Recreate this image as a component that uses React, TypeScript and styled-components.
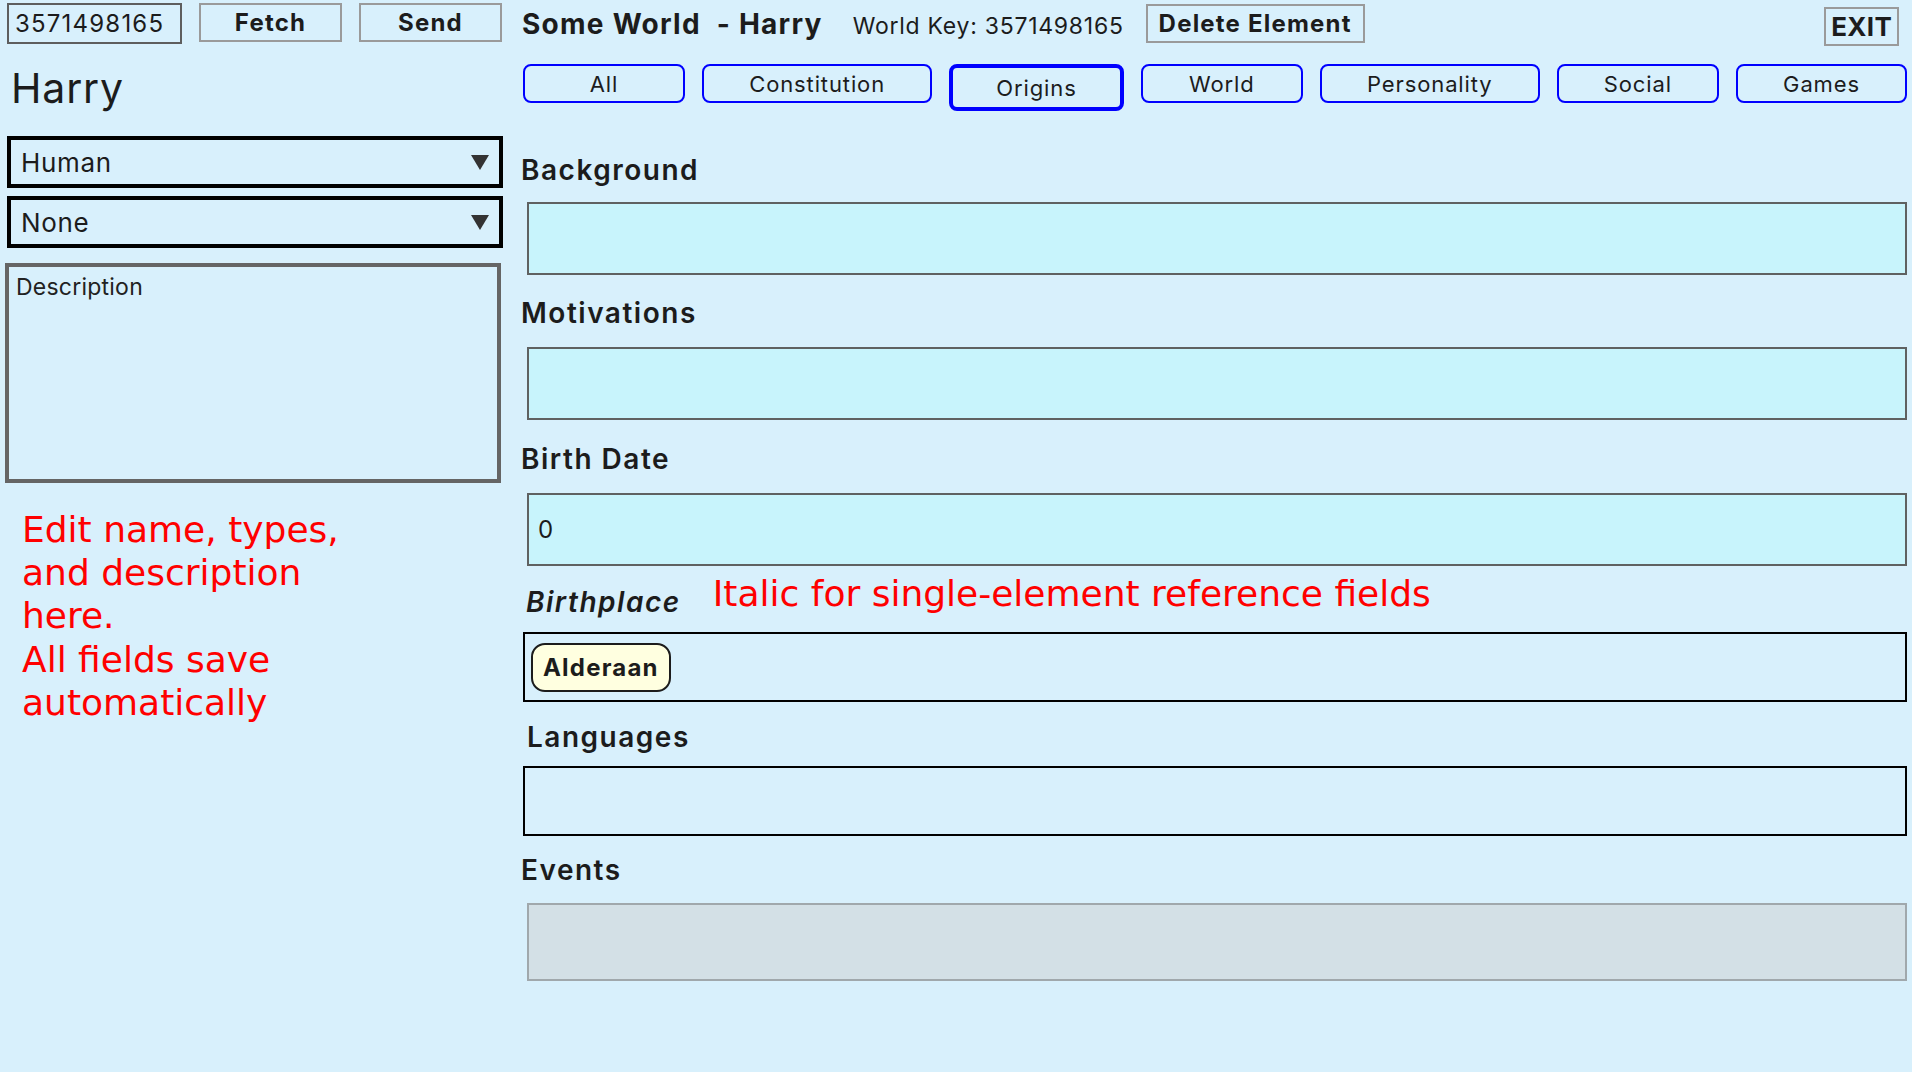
import React from "react";
import styled, { createGlobalStyle, css } from "styled-components";

const GlobalStyle = createGlobalStyle`
  html, body {
    margin: 0;
    padding: 0;
    background: #d8f0fc;
  }
  body {
    font-family: Inter, "Noto Sans", sans-serif;
    color: #1c1c1c;
    letter-spacing: 0.04em;
  }
  *, *::before, *::after {
    box-sizing: border-box;
  }
`;

const Page = styled.div`
  display: grid;
  grid-template-columns: 498px 1fr;
  column-gap: 18px;
  padding: 0 5px;
  min-height: 100vh;
  background: #d8f0fc;
`;

/* ---------- Left column ---------- */

const LeftCol = styled.div`
  display: flex;
  flex-direction: column;
  padding-top: 3px;
`;

const KeyRow = styled.div`
  display: flex;
  align-items: flex-start;
  gap: 17px;
  padding-left: 2px;
`;

const KeyInput = styled.input`
  width: 175px;
  height: 41px;
  border: 2px solid #5e5e5e;
  background: transparent;
  font-family: inherit;
  font-size: 24px;
  font-weight: 400;
  letter-spacing: 0.05em;
  color: #1c1c1c;
  padding: 0 0 0 6px;
  outline: none;
`;

const GrayButton = styled.button<{ $wide?: boolean; $size?: number }>`
  height: 39px;
  ${(p) => (p.$wide ? css`width: 143px;` : css`padding: 0 11px;`)}
  border: 2px solid #9a9a9a;
  background: transparent;
  font-family: inherit;
  font-size: ${(p) => p.$size ?? 24}px;
  font-weight: 700;
  letter-spacing: 0.05em;
  color: #1c1c1c;
  cursor: pointer;
`;

const Name = styled.h2`
  margin: 19px 0 0;
  padding-left: 6px;
  font-size: 41px;
  line-height: 50px;
  font-weight: 400;
  letter-spacing: 0.02em;
  color: #1c1c1c;
`;

const SelectBox = styled.div<{ $gap: number }>`
  margin: ${(p) => p.$gap}px 0 0 2px;
  width: 496px;
  height: 52px;
  border: 4px solid #000;
  display: flex;
  align-items: center;
  justify-content: space-between;
  padding: 0 10px;
  font-size: 26px;
  color: #1c1c1c;
`;

const Caret = styled.span`
  width: 0;
  height: 0;
  border-left: 9.5px solid transparent;
  border-right: 9.5px solid transparent;
  border-top: 15px solid #333;
`;

const Description = styled.textarea`
  margin-top: 15px;
  width: 496px;
  height: 220px;
  border: 4px solid #656565;
  background: transparent;
  padding: 6px 7px;
  font-family: inherit;
  font-size: 23px;
  letter-spacing: 0.01em;
  color: #1c1c1c;
  resize: none;
  outline: none;
  &::placeholder {
    color: #222;
    opacity: 1;
  }
`;

const Hint = styled.p`
  margin: 25px 0 0;
  padding-left: 17px;
  max-width: 360px;
  font-family: "DejaVu Sans", "Liberation Sans", sans-serif;
  font-size: 36px;
  line-height: 43.2px;
  letter-spacing: 0;
  color: #ff0000;
`;

/* ---------- Right column ---------- */

const RightCol = styled.div`
  display: flex;
  flex-direction: column;
`;

const TopBar = styled.div`
  display: flex;
  align-items: center;
  height: 39px;
  margin-top: 4px;
`;

const Title = styled.h1`
  margin: 0;
  padding-left: 1px;
  font-size: 28px;
  line-height: 34px;
  font-weight: 700;
  letter-spacing: 0.045em;
  color: #1c1c1c;
  white-space: pre;
`;

const WorldKey = styled.span`
  margin: 4px 22px 0 30px;
  font-size: 23px;
  letter-spacing: 0.032em;
  color: #1c1c1c;
`;

const ExitButton = styled(GrayButton)`
  margin: 6px 8px 0 auto;
  padding: 0 5px;
  letter-spacing: 0.01em;
`;

const Tabs = styled.nav`
  display: flex;
  justify-content: space-between;
  align-items: flex-start;
  margin: 21px 0 0 2px;
`;

const Tab = styled.button<{ $active?: boolean }>`
  min-width: 162px;
  height: ${(p) => (p.$active ? 47 : 39)}px;
  padding: 0 ${(p) => (p.$active ? 43 : 45)}px;
  border: ${(p) => (p.$active ? 4 : 2)}px solid #0000ff;
  border-radius: 8px;
  background: transparent;
  font-family: inherit;
  font-size: 22px;
  letter-spacing: 0.04em;
  color: #1c1c1c;
  cursor: pointer;
`;

const Field = styled.section<{ $top: number }>`
  display: flex;
  flex-direction: column;
  margin-top: ${(p) => p.$top}px;
`;

const Label = styled.label<{ $indent?: number; $italic?: boolean }>`
  padding-left: ${(p) => p.$indent ?? 0}px;
  font-size: 28px;
  line-height: 34px;
  font-weight: 600;
  letter-spacing: 0.054em;
  font-style: ${(p) => (p.$italic ? "italic" : "normal")};
  color: #1c1c1c;
`;

const LabelRow = styled.div`
  display: flex;
  align-items: flex-end;
  gap: 32px;
`;

const Note = styled.span`
  margin-bottom: 4px;
  font-family: "DejaVu Sans", "Liberation Sans", sans-serif;
  font-size: 36px;
  line-height: 43px;
  letter-spacing: 0;
  color: #ff0000;
`;

const TextBox = styled.textarea<{ $top: number }>`
  margin: ${(p) => p.$top}px 0 0 6px;
  height: 73px;
  border: 2px solid #5f6161;
  background: #c8f4fc;
  padding: 0 9px;
  font-family: inherit;
  font-size: 24px;
  color: #1c1c1c;
  resize: none;
  outline: none;
`;

const LineBox = styled.input<{ $top: number }>`
  margin: ${(p) => p.$top}px 0 0 6px;
  height: 73px;
  border: 2px solid #5f6161;
  background: #c8f4fc;
  padding: 0 9px;
  font-family: inherit;
  font-size: 24px;
  color: #1c1c1c;
  outline: none;
`;

const RefBox = styled.div<{ $top: number }>`
  margin: ${(p) => p.$top}px 0 0 2px;
  height: 70px;
  border: 2px solid #000;
  display: flex;
  align-items: center;
  gap: 8px;
  padding: 0 6px;
`;

const Chip = styled.span`
  display: inline-flex;
  align-items: center;
  height: 49px;
  padding: 0 10px;
  border: 2px solid #1c1c1c;
  border-radius: 14px;
  background: #ffffe0;
  font-size: 24px;
  font-weight: 700;
  letter-spacing: 0.05em;
  color: #1c1c1c;
`;

const EventsBox = styled.div<{ $top: number }>`
  margin: ${(p) => p.$top}px 0 0 6px;
  height: 78px;
  border: 2px solid #a0a8ac;
  background: #d3e0e6;
`;

const tabs = ["All", "Constitution", "Origins", "World", "Personality", "Social", "Games"];

export default function App() {
  return (
    <>
      <GlobalStyle />
      <Page>
        <LeftCol>
          <KeyRow>
            <KeyInput defaultValue="3571498165" />
            <GrayButton $wide>Fetch</GrayButton>
            <GrayButton $wide>Send</GrayButton>
          </KeyRow>
          <Name>Harry</Name>
          <SelectBox $gap={23}>
            <span>Human</span>
            <Caret />
          </SelectBox>
          <SelectBox $gap={8}>
            <span>None</span>
            <Caret />
          </SelectBox>
          <Description placeholder="Description" />
          <Hint>
            Edit name, types, and description here.
            <br />
            All fields save automatically
          </Hint>
        </LeftCol>

        <RightCol>
          <TopBar>
            <Title>{"Some World  - Harry"}</Title>
            <WorldKey>World Key: 3571498165</WorldKey>
            <GrayButton>Delete Element</GrayButton>
            <ExitButton $size={26}>EXIT</ExitButton>
          </TopBar>

          <Tabs>
            {tabs.map((t) => (
              <Tab key={t} $active={t === "Origins"}>
                {t}
              </Tab>
            ))}
          </Tabs>

          <Field $top={42}>
            <Label>Background</Label>
            <TextBox $top={15} />
          </Field>

          <Field $top={21}>
            <Label>Motivations</Label>
            <TextBox $top={17} />
          </Field>

          <Field $top={22}>
            <Label>Birth Date</Label>
            <LineBox $top={17} defaultValue="0" />
          </Field>

          <Field $top={6}>
            <LabelRow>
              <Label $italic $indent={5}>
                Birthplace
              </Label>
              <Note>Italic for single-element reference fields</Note>
            </LabelRow>
            <RefBox $top={13}>
              <Chip>Alderaan</Chip>
            </RefBox>
          </Field>

          <Field $top={18}>
            <Label $indent={6}>Languages</Label>
            <RefBox $top={12} />
          </Field>

          <Field $top={17}>
            <Label>Events</Label>
            <EventsBox $top={16} />
          </Field>
        </RightCol>
      </Page>
    </>
  );
}
